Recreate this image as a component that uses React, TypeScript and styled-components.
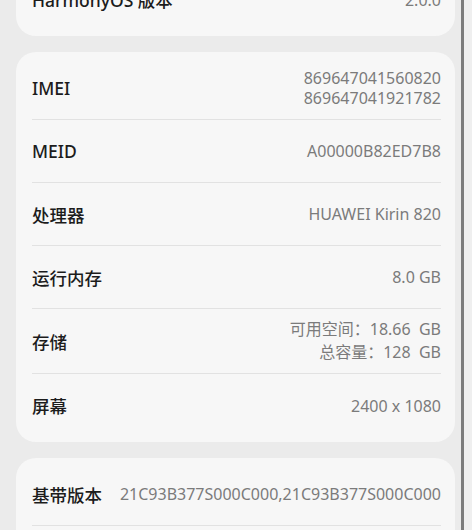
import styled, { createGlobalStyle } from "styled-components";

const GlobalStyle = createGlobalStyle`
  html, body {
    margin: 0;
    padding: 0;
    background: #efefef;
  }
  body {
    font-family: "Noto Sans", "Noto Sans CJK SC", sans-serif;
    overflow: hidden;
  }
`;

const Frame = styled.div`
  width: 472px;
  height: 530px;
  overflow: hidden;
  display: flex;
  background: #efefef;
`;
const Screen = styled.main`
  width: 464px;
  height: 530px;
  flex-shrink: 0;
  box-sizing: border-box;
  background: #ebebeb;
  border-right: 3px solid #7c7c7c;
  padding: 0 6px 0 16px;
  overflow: hidden;
`;
const Scroller = styled.div`
  margin-top: -37px;
  display: flex;
  flex-direction: column;
  gap: 16px;
`;
const Card = styled.section`
  background: #f7f7f7;
  border-radius: 20px;
  padding: 5px 14px 5px 16px;
  display: flex;
  flex-direction: column;
`;
const Row = styled.div`
  display: flex;
  align-items: center;
  justify-content: space-between;
  gap: 16px;
  min-height: 63px;
  padding: 9px 0;
  box-sizing: border-box;
  border-bottom: 1px solid #e2e2e2;
  &:last-child {
    border-bottom: none;
  }
`;
const Label = styled.span`
  font-size: 17.5px;
  font-weight: 500;
  color: #1c1c1c;
  white-space: nowrap;
`;
const Value = styled.div<{ $loose?: boolean }>`
  font-size: 16px;
  color: #7b7b7b;
  text-align: right;
  line-height: ${(p) => (p.$loose ? 23 : 20)}px;
  white-space: pre;
`;

type Item = { label: string; value: string[]; loose?: boolean };

const groups: Item[][] = [
  [{ label: "HarmonyOS 版本", value: ["2.0.0"] }],
  [
    { label: "IMEI", value: ["869647041560820", "869647041921782"] },
    { label: "MEID", value: ["A00000B82ED7B8"] },
    { label: "处理器", value: ["HUAWEI Kirin 820"] },
    { label: "运行内存", value: ["8.0 GB"] },
    {
      label: "存储",
      value: ["可用空间：18.66  GB", "总容量：128  GB"],
      loose: true,
    },
    { label: "屏幕", value: ["2400 x 1080"] },
  ],
  [
    { label: "基带版本", value: ["21C93B377S000C000,21C93B377S000C000"] },
    { label: "内核版本", value: ["4.14.116"] },
  ],
];

function App() {
  return (
    <Frame>
      <GlobalStyle />
      <Screen>
        <Scroller>
          {groups.map((items, gi) => (
            <Card key={gi}>
              {items.map((it) => (
                <Row key={it.label}>
                  <Label>{it.label}</Label>
                  <Value $loose={it.loose}>
                    {it.value.map((line) => (
                      <div key={line}>{line}</div>
                    ))}
                  </Value>
                </Row>
              ))}
            </Card>
          ))}
        </Scroller>
      </Screen>
    </Frame>
  );
}

export default App;
